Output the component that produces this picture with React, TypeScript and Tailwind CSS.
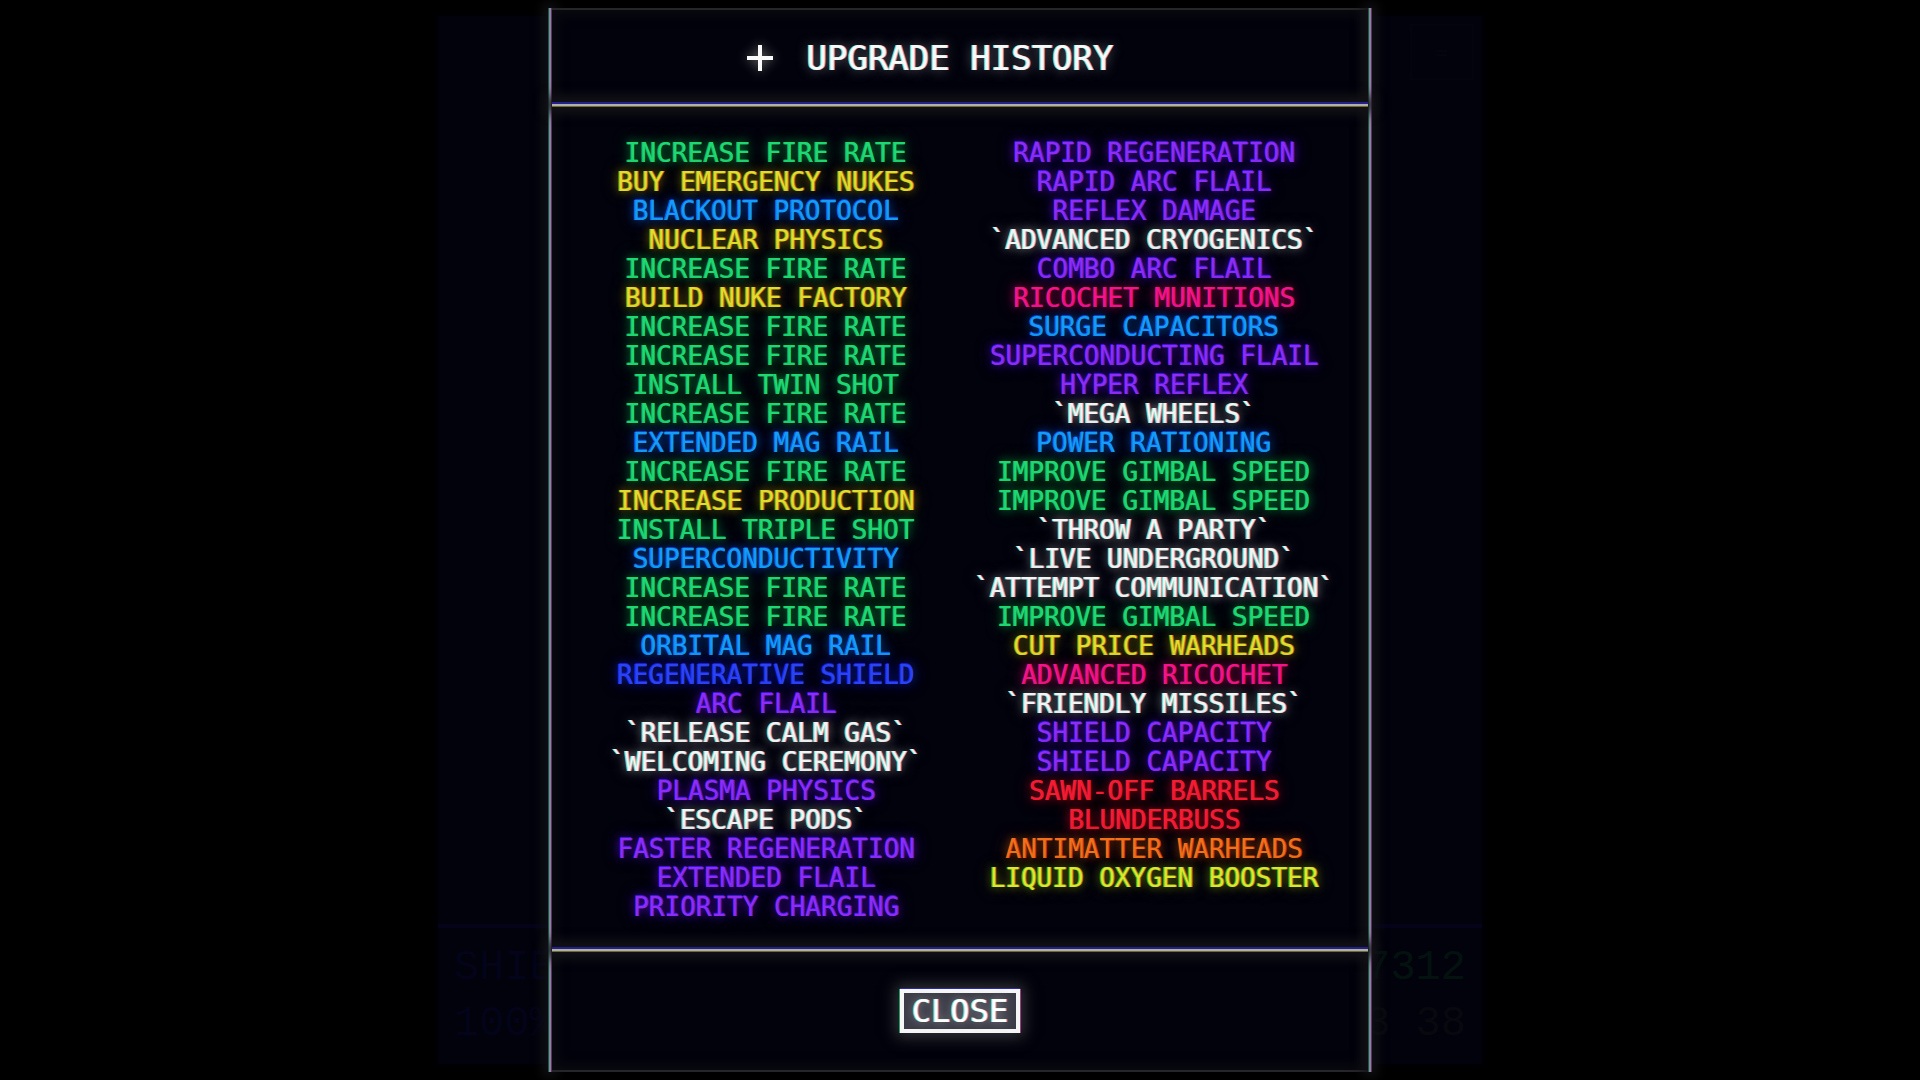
import React from "react";

type Tone =
  | "green" | "yellow" | "sky" | "blue" | "purple" | "white" | "pink" | "red" | "orange" | "lime";

const tones: Record<Tone, string> = {
  green: "text-[#1fd873] [text-shadow:-1px_0_#14b45e,0_0_8px_#0a8a3c,0_0_16px_#07602a]",
  yellow: "text-[#e2dc2c] [text-shadow:1px_0_#b0651a,-1px_0_#7c9a18,0_0_8px_#7e700a,0_0_16px_#4a4006]",
  sky: "text-[#149cf8] [text-shadow:0_-1px_#0a3fd0,-1px_0_#0c78dc,0_0_8px_#0650b0,0_0_16px_#043480]",
  blue: "text-[#2a44f5] [text-shadow:0_-1px_#1a1ad0,-1px_0_#2030d8,0_0_8px_#1020b0,0_0_16px_#0a147e]",
  purple: "text-[#8c2cf5] [text-shadow:0_-1px_#3a14e0,1px_0_#6a20d0,0_0_8px_#5010b8,0_0_16px_#300a7e]",
  white: "text-[#f4f4f4] [text-shadow:-1px_0_#6fd8a0,1px_0_#c890c0,0_0_8px_#808088,0_0_16px_#505054]",
  pink: "text-[#f21488] [text-shadow:1px_0_#d40e70,0_0_8px_#9e0850,0_0_16px_#620634]",
  red: "text-[#f21c34] [text-shadow:1px_0_#e0182e,0_0_8px_#a00c1a,0_0_16px_#620810]",
  orange: "text-[#f2701a] [text-shadow:1px_0_#c03a12,0_0_8px_#8e3c0a,0_0_16px_#582406]",
  lime: "text-[#dce62c] [text-shadow:-1px_0_#3fb020,1px_0_#b07a1a,0_0_8px_#6e7c0a,0_0_16px_#424c06]",
};

const left: [string, Tone][] = [
  ["INCREASE FIRE RATE", "green"],
  ["BUY EMERGENCY NUKES", "yellow"],
  ["BLACKOUT PROTOCOL", "sky"],
  ["NUCLEAR PHYSICS", "yellow"],
  ["INCREASE FIRE RATE", "green"],
  ["BUILD NUKE FACTORY", "yellow"],
  ["INCREASE FIRE RATE", "green"],
  ["INCREASE FIRE RATE", "green"],
  ["INSTALL TWIN SHOT", "green"],
  ["INCREASE FIRE RATE", "green"],
  ["EXTENDED MAG RAIL", "sky"],
  ["INCREASE FIRE RATE", "green"],
  ["INCREASE PRODUCTION", "yellow"],
  ["INSTALL TRIPLE SHOT", "green"],
  ["SUPERCONDUCTIVITY", "sky"],
  ["INCREASE FIRE RATE", "green"],
  ["INCREASE FIRE RATE", "green"],
  ["ORBITAL MAG RAIL", "sky"],
  ["REGENERATIVE SHIELD", "blue"],
  ["ARC FLAIL", "purple"],
  ["`RELEASE CALM GAS`", "white"],
  ["`WELCOMING CEREMONY`", "white"],
  ["PLASMA PHYSICS", "purple"],
  ["`ESCAPE PODS`", "white"],
  ["FASTER REGENERATION", "purple"],
  ["EXTENDED FLAIL", "purple"],
  ["PRIORITY CHARGING", "purple"],
];

const right: [string, Tone][] = [
  ["RAPID REGENERATION", "purple"],
  ["RAPID ARC FLAIL", "purple"],
  ["REFLEX DAMAGE", "purple"],
  ["`ADVANCED CRYOGENICS`", "white"],
  ["COMBO ARC FLAIL", "purple"],
  ["RICOCHET MUNITIONS", "pink"],
  ["SURGE CAPACITORS", "sky"],
  ["SUPERCONDUCTING FLAIL", "purple"],
  ["HYPER REFLEX", "purple"],
  ["`MEGA WHEELS`", "white"],
  ["POWER RATIONING", "sky"],
  ["IMPROVE GIMBAL SPEED", "green"],
  ["IMPROVE GIMBAL SPEED", "green"],
  ["`THROW A PARTY`", "white"],
  ["`LIVE UNDERGROUND`", "white"],
  ["`ATTEMPT COMMUNICATION`", "white"],
  ["IMPROVE GIMBAL SPEED", "green"],
  ["CUT PRICE WARHEADS", "yellow"],
  ["ADVANCED RICOCHET", "pink"],
  ["`FRIENDLY MISSILES`", "white"],
  ["SHIELD CAPACITY", "purple"],
  ["SHIELD CAPACITY", "purple"],
  ["SAWN-OFF BARRELS", "red"],
  ["BLUNDERBUSS", "red"],
  ["ANTIMATTER WARHEADS", "orange"],
  ["LIQUID OXYGEN BOOSTER", "lime"],
];

function UpgradeList({ items }: { items: [string, Tone][] }) {
  return (
    <ul className="text-center text-[26px] leading-[29px] whitespace-nowrap">
      {items.map(([name, tone], i) => (
        <li key={i} className={tones[tone]}>{name}</li>
      ))}
    </ul>
  );
}

/* Horizontal rule with split colour channels and a soft halo */
function Rule() {
  return (
    <div className="z-10 shrink-0 shadow-[0_0_12px_6px_#141418]">
      <div className="h-0.5 bg-[#22208a]" />
      <div className="h-0.5 bg-[#b0b0a8]" />
      <div className="h-px bg-[#6c6c34]" />
    </div>
  );
}

function SideRule() {
  return (
    <div className="flex w-1 shrink-0 shadow-[0_0_12px_5px_#121216]">
      <div className="w-px bg-[#155c3a]" />
      <div className="w-0.5 bg-[#8088a0]" />
      <div className="w-px bg-[#6a2a64]" />
    </div>
  );
}

export default function App() {
  return (
    <main className="grid min-h-screen justify-center overflow-hidden bg-black font-['DejaVu_Sans_Mono','Liberation_Mono',monospace]">
      {/* Dimmed game screen behind the dialog */}
      <div
        aria-hidden="true"
        className="col-start-1 row-start-1 my-4 flex w-[1044px] flex-col justify-between bg-[#02020c] shadow-[0_0_10px_4px_#010106]"
      >
        <div className="mt-2 mr-2 flex h-14 w-16 items-center justify-center self-end border-2 border-[#04040f] text-[20px] text-[#05050f]">=</div>
        <div className="flex justify-between border-t-4 border-[#04031a] px-4 py-3 font-['Liberation_Mono',monospace] text-[42px] leading-[56px]">
          <div className="text-[#03031a]">SHIELD<br />100%</div>
          <div className="text-right text-[#03120f]">7312<br /><span className="text-[#08080f]">3 38</span></div>
        </div>
      </div>

      <section
        role="dialog"
        aria-labelledby="history-title"
        className="col-start-1 row-start-1 z-10 my-2 flex w-[824px] justify-self-center"
      >
        <SideRule />
        <div className="flex min-w-0 grow flex-col border-y-2 border-[#26262a] bg-[#02020c] shadow-[inset_0_0_12px_5px_#0a0a10]">
          <header className="flex grow items-center justify-center gap-8 pt-1 pr-15 text-[34px] leading-10 text-[#f8f8f8] [text-shadow:-1px_0_#6fd8a0,1px_0_#c890c0,0_0_12px_#707078]">
            <svg viewBox="0 0 28 28" className="size-7 drop-shadow-[0_0_6px_#808080]" aria-hidden="true">
              <path d="M14 1v26M1 14h26" stroke="#fafafa" strokeWidth="4" fill="none" />
            </svg>
            <h1 id="history-title">UPGRADE HISTORY</h1>
          </header>
          <Rule />
          <div className="grid grid-cols-2 px-5 pt-8 pb-[25px]">
            <UpgradeList items={left} />
            <UpgradeList items={right} />
          </div>
          <Rule />
          <footer className="flex h-[118px] items-center justify-center">
            <button
              type="button"
              className="border-4 border-[#f6f6f6] bg-[#3c3c48] px-2 text-[32px] leading-9 text-white shadow-[0_-1px_#2a2aa0,-1px_0_#20a060,1px_0_#a04080,0_0_14px_4px_#34343a] [text-shadow:-1px_0_#6fd8a0,1px_0_#c890c0,0_0_10px_#909098]"
            >
              CLOSE
            </button>
          </footer>
        </div>
        <SideRule />
      </section>
    </main>
  );
}
